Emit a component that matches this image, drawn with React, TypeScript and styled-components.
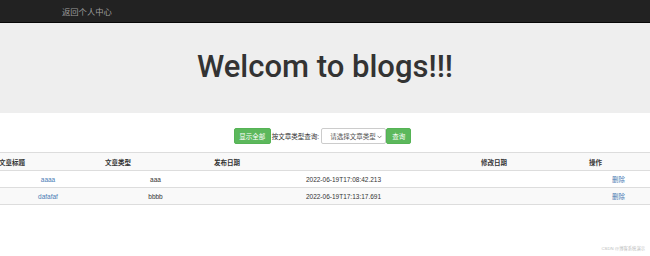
import React from "react";
import styled, { createGlobalStyle } from "styled-components";

const Global = createGlobalStyle`
  html, body { margin: 0; padding: 0; background: #fff; }
  body { font-family: "Liberation Sans", "Noto Sans CJK SC", sans-serif; color: #333; overflow: hidden; }
  * { box-sizing: border-box; }
`;

const Page = styled.div`
  position: relative;
  width: 650px;
  height: 256px;
  overflow: hidden;
`;

const NavBar = styled.div`
  height: 23px;
  background: #222;
  border-bottom: 1px solid #080808;
  display: flex;
  align-items: center;
  padding-left: 62px;
`;

const NavLink = styled.a`
  color: #9d9d9d;
  font-size: 8.3px;
  text-decoration: none;
`;

const Jumbotron = styled.div`
  height: 90px;
  background: #eee;
  display: flex;
  align-items: center;
  justify-content: center;
`;

const Title = styled.h1`
  margin: 0;
  font-family: "Roboto", "Liberation Sans", sans-serif;
  font-weight: 500;
  font-size: 31px;
  color: #333;
  padding-bottom: 4px;
`;

const Controls = styled.div`
  display: flex;
  justify-content: center;
  align-items: center;
  margin-top: 15px;
  padding-right: 5px;
  height: 16px;
`;

const GreenButton = styled.button<{ $w: number }>`
  width: ${(p) => p.$w}px;
  height: 16px;
  background: #5cb85c;
  border: 1px solid #55b355;
  border-radius: 2px;
  color: #fff;
  font-family: inherit;
  font-size: 6.5px;
  padding: 0;
  display: flex;
  align-items: center;
  justify-content: center;
`;

const Label = styled.span`
  font-size: 6.5px;
  color: #333;
  margin: 0 2px 0 1px;
`;

const Select = styled.div`
  width: 65px;
  height: 16px;
  border: 1px solid #ccc;
  border-radius: 2px;
  background: #fff;
  display: flex;
  align-items: center;
  padding-left: 8px;
  font-size: 6.5px;
  color: #555;
  position: relative;
`;

const Chevron = styled.svg`
  position: absolute;
  right: 3px;
  top: 6px;
`;

const Table = styled.table`
  margin-top: 8px;
  margin-left: -5px;
  width: 657px;
  border-collapse: collapse;
  table-layout: fixed;
  font-size: 6.5px;
`;

const Row = styled.tr<{ $striped?: boolean }>`
  background: ${(p) => (p.$striped ? "#f9f9f9" : "#fff")};
`;

const Th = styled.th<{ $w: number }>`
  width: ${(p) => p.$w}px;
  text-align: left;
  font-weight: bold;
  color: #333;
  padding: 0 4px;
  height: 18px;
  border-top: 1px solid #ddd;
  border-bottom: 1px solid #ddd;
`;

const Td = styled.td`
  text-align: center;
  padding: 0 4px;
  height: 17px;
  border-bottom: 1px solid #ddd;
  color: #333;
`;

const Link = styled.a`
  color: #4a7db5;
  text-decoration: none;
`;

const Watermark = styled.div`
  position: absolute;
  right: 5px;
  bottom: 5px;
  font-size: 4.3px;
  color: #bbb;
`;

const rows = [
  { title: "aaaa", type: "aaa", date: "2022-06-19T17:08:42.213" },
  { title: "dafafaf", type: "bbbb", date: "2022-06-19T17:13:17.691" },
];

export default function App() {
  return (
    <Page>
      <Global />
      <NavBar>
        <NavLink href="#">返回个人中心</NavLink>
      </NavBar>
      <Jumbotron>
        <Title>Welcom to blogs!!!</Title>
      </Jumbotron>
      <Controls>
        <GreenButton $w={37}>显示全部</GreenButton>
        <Label>按文章类型查询:</Label>
        <Select>
          请选择文章类型
          <Chevron width="5" height="4" viewBox="0 0 5 4">
            <path d="M0.5 0.8 L2.5 2.8 L4.5 0.8" fill="none" stroke="#666" strokeWidth="0.8" />
          </Chevron>
        </Select>
        <GreenButton $w={25}>查询</GreenButton>
      </Controls>
      <Table>
        <tbody>
          <Row $striped>
            <Th $w={106}>文章标题</Th>
            <Th $w={109}>文章类型</Th>
            <Th $w={267}>发布日期</Th>
            <Th $w={108}>修改日期</Th>
            <Th $w={67}>操作</Th>
          </Row>
          {rows.map((r, i) => (
            <Row key={r.title} $striped={i % 2 === 1}>
              <Td>
                <Link href="#">{r.title}</Link>
              </Td>
              <Td>{r.type}</Td>
              <Td>{r.date}</Td>
              <Td></Td>
              <Td>
                <Link href="#">删除</Link>
              </Td>
            </Row>
          ))}
        </tbody>
      </Table>
      <Watermark>CSDN @博客系统演示</Watermark>
    </Page>
  );
}
